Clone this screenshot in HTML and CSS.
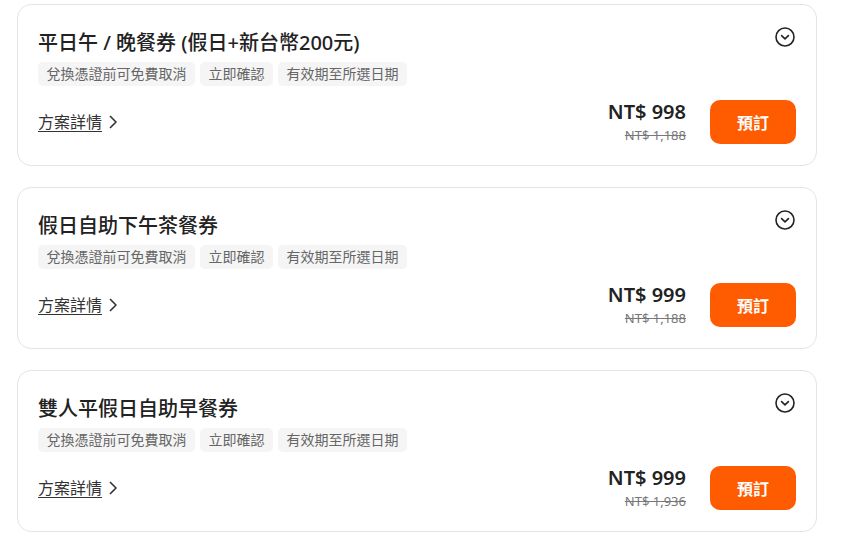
FILE: index.html
```html
<!DOCTYPE html>
<html lang="zh-Hant">
<head>
<meta charset="utf-8">
<link rel="stylesheet" href="styles.css">
</head>
<body>
<div class="list">
  <div class="card">
    <div class="head">
      <h2 class="title">平日午 / 晚餐券 (假日+新台幣200元)</h2>
      <svg class="toggle" viewBox="0 0 20 20" width="20" height="20"><circle cx="10" cy="10" r="9" fill="none" stroke="#222" stroke-width="1.6"/><path d="M6.6 8.6 L10 11.8 L13.4 8.6" fill="none" stroke="#222" stroke-width="1.6" stroke-linecap="round" stroke-linejoin="round"/></svg>
    </div>
    <div class="tags"><span class="tag">兌換憑證前可免費取消</span><span class="tag">立即確認</span><span class="tag">有效期至所選日期</span></div>
    <div class="foot">
      <a class="detail">方案詳情<svg class="chev" viewBox="0 0 12 16" width="12" height="16"><path d="M3 2 L9 8 L3 14" fill="none" stroke="#333" stroke-width="1.6" stroke-linejoin="round"/></svg></a>
      <div class="buy">
        <div class="prices"><div class="price">NT$ 998</div><div class="orig">NT$ 1,188</div></div>
        <button class="book">預訂</button>
      </div>
    </div>
  </div>
  <div class="card">
    <div class="head">
      <h2 class="title">假日自助下午茶餐券</h2>
      <svg class="toggle" viewBox="0 0 20 20" width="20" height="20"><circle cx="10" cy="10" r="9" fill="none" stroke="#222" stroke-width="1.6"/><path d="M6.6 8.6 L10 11.8 L13.4 8.6" fill="none" stroke="#222" stroke-width="1.6" stroke-linecap="round" stroke-linejoin="round"/></svg>
    </div>
    <div class="tags"><span class="tag">兌換憑證前可免費取消</span><span class="tag">立即確認</span><span class="tag">有效期至所選日期</span></div>
    <div class="foot">
      <a class="detail">方案詳情<svg class="chev" viewBox="0 0 12 16" width="12" height="16"><path d="M3 2 L9 8 L3 14" fill="none" stroke="#333" stroke-width="1.6" stroke-linejoin="round"/></svg></a>
      <div class="buy">
        <div class="prices"><div class="price">NT$ 999</div><div class="orig">NT$ 1,188</div></div>
        <button class="book">預訂</button>
      </div>
    </div>
  </div>
  <div class="card">
    <div class="head">
      <h2 class="title">雙人平假日自助早餐券</h2>
      <svg class="toggle" viewBox="0 0 20 20" width="20" height="20"><circle cx="10" cy="10" r="9" fill="none" stroke="#222" stroke-width="1.6"/><path d="M6.6 8.6 L10 11.8 L13.4 8.6" fill="none" stroke="#222" stroke-width="1.6" stroke-linecap="round" stroke-linejoin="round"/></svg>
    </div>
    <div class="tags"><span class="tag">兌換憑證前可免費取消</span><span class="tag">立即確認</span><span class="tag">有效期至所選日期</span></div>
    <div class="foot">
      <a class="detail">方案詳情<svg class="chev" viewBox="0 0 12 16" width="12" height="16"><path d="M3 2 L9 8 L3 14" fill="none" stroke="#333" stroke-width="1.6" stroke-linejoin="round"/></svg></a>
      <div class="buy">
        <div class="prices"><div class="price">NT$ 999</div><div class="orig">NT$ 1,936</div></div>
        <button class="book">預訂</button>
      </div>
    </div>
  </div>
</div>
</body>
</html>
```

FILE: styles.css
```css
* { box-sizing: border-box; }
body {
  margin: 0;
  background: #fff;
  font-family: "Noto Sans", "Noto Sans CJK TC", sans-serif;
  color: #222;
}
.list {
  width: 800px;
  margin-left: 17px;
  padding-top: 4px;
  display: flex;
  flex-direction: column;
  gap: 21px;
}
.card {
  border: 1px solid #e4e4e4;
  border-radius: 14px;
  padding: 22px 20px 21px 20px;
  height: 162px;
}
.head {
  display: flex;
  justify-content: space-between;
  align-items: flex-start;
}
.title {
  margin: 0;
  font-size: 20px;
  line-height: 32px;
  font-weight: 500;
  color: #222;
}
.toggle { flex: none; margin-right: 1px; }
.tags {
  display: flex;
  gap: 5px;
  margin-top: 3px;
}
.tag {
  background: #f5f5f5;
  color: #666;
  font-size: 14px;
  line-height: 24px;
  height: 24px;
  padding: 0 8.5px;
  border-radius: 5px;
}
.foot {
  margin-top: 14px;
  display: flex;
  justify-content: space-between;
  align-items: center;
}
.detail {
  display: flex;
  align-items: center;
  font-size: 16px;
  line-height: 24px;
  color: #333;
  text-decoration: underline;
  text-underline-offset: 3px;
  text-decoration-thickness: 1px;
}
.chev { margin-left: 5px; }
.buy {
  display: flex;
  align-items: center;
  gap: 24px;
}
.prices {
  display: flex;
  flex-direction: column;
  align-items: flex-end;
}
.price {
  font-size: 20px;
  font-weight: 600;
  line-height: 24px;
  color: #222;
}
.orig {
  margin-top: 2px;
  font-size: 13px;
  line-height: 18px;
  color: #777;
  text-decoration: line-through;
}
.book {
  width: 86px;
  height: 44px;
  border: none;
  border-radius: 10px;
  background: #ff5b00;
  color: #fff;
  font-family: "Noto Sans", "Noto Sans CJK TC", sans-serif;
  font-size: 16px;
  font-weight: 700;
}
```
